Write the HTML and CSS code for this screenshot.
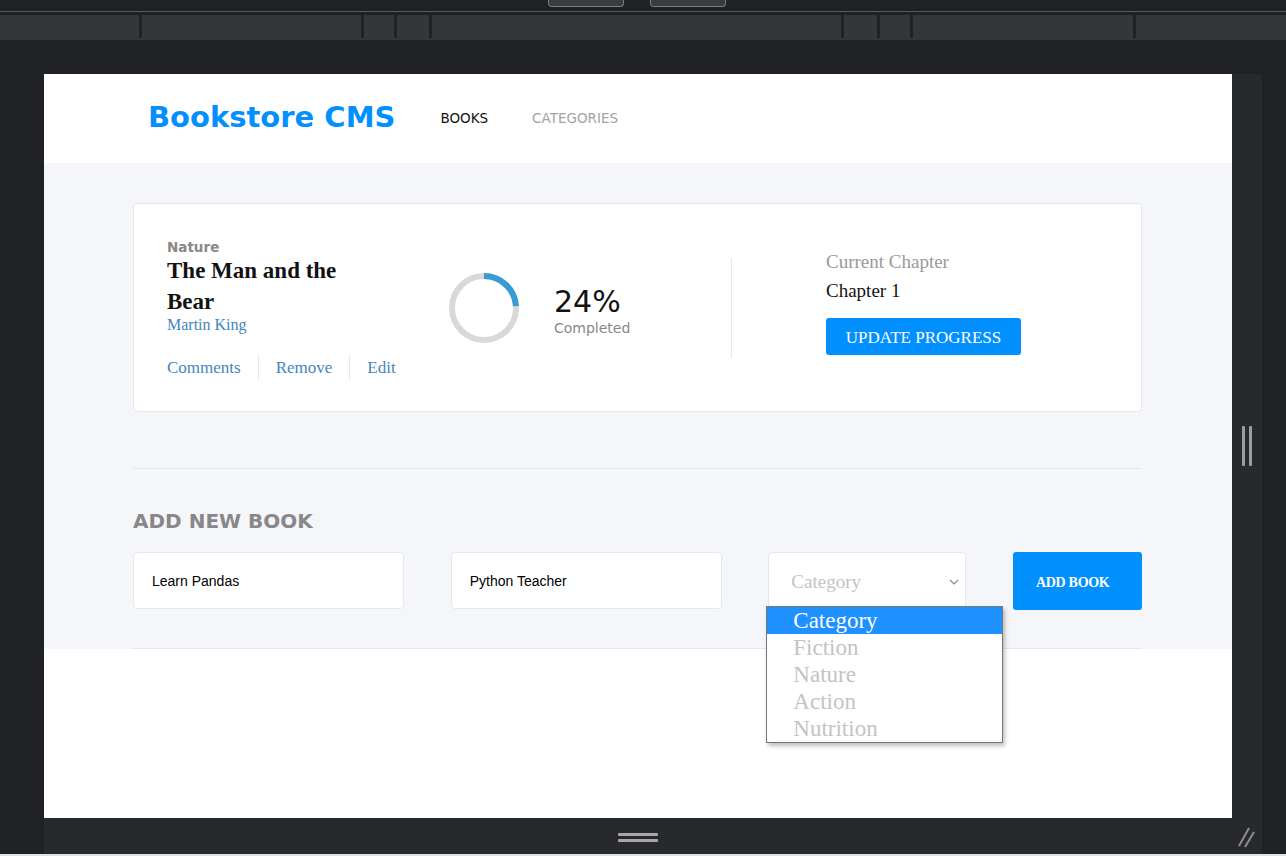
FILE: index.html
```html
<!DOCTYPE html>
<html lang="en">
<head>
<meta charset="utf-8">
<title>Bookstore CMS</title>
<link rel="stylesheet" href="styles.css">
</head>
<body>
<div class="chrome-top">
  <div class="tabstrip">
    <span class="tab-stub"></span>
    <span class="tab-stub"></span>
  </div>
  <div class="toolbar">
    <span class="seg s1"></span><span class="sep"></span>
    <span class="seg s2"></span><span class="sep"></span>
    <span class="seg s3"></span><span class="sep"></span>
    <span class="seg s4"></span><span class="sep"></span>
    <span class="seg s5"></span><span class="sep"></span>
    <span class="seg s6"></span><span class="sep"></span>
    <span class="seg s7"></span><span class="sep"></span>
    <span class="seg s8"></span><span class="sep"></span>
    <span class="seg s9"></span>
  </div>
</div>

<div class="workspace">
  <div class="gutter"></div>
  <div class="frame">
    <header class="app-header">
      <h1 class="logo">Bookstore CMS</h1>
      <nav>
        <ul class="nav">
          <li><a href="#" class="active">BOOKS</a></li>
          <li><a href="#" class="inactive">CATEGORIES</a></li>
        </ul>
      </nav>
    </header>

    <main class="main">
      <div class="container">
        <section class="book-card">
          <div class="info">
            <p class="genre">Nature</p>
            <h2 class="title">The Man and the Bear</h2>
            <p class="author">Martin King</p>
            <ul class="actions">
              <li>Comments</li>
              <li>Remove</li>
              <li>Edit</li>
            </ul>
          </div>
          <div class="progress">
            <svg class="ring" width="70" height="70" viewBox="0 0 70 70">
              <circle cx="35" cy="35" r="32" fill="none" stroke="#d9d9d9" stroke-width="6"/>
              <circle cx="35" cy="35" r="32" fill="none" stroke="#379cd2" stroke-width="6" stroke-dasharray="48.25 201.06" transform="rotate(-90 35 35)"/>
            </svg>
            <div class="progress-text">
              <p class="percent">24%</p>
              <p class="completed">Completed</p>
            </div>
          </div>
          <div class="vline"></div>
          <div class="chapter">
            <p class="chapter-label">Current Chapter</p>
            <p class="chapter-name">Chapter 1</p>
            <button class="update-btn" type="button">UPDATE PROGRESS</button>
          </div>
        </section>

        <hr class="divider">

        <section class="add-book">
          <h2 class="add-title">ADD NEW BOOK</h2>
          <form class="add-form">
            <input class="field" type="text" value="Learn Pandas">
            <input class="field" type="text" value="Python Teacher">
            <div class="select-wrap">
              <div class="select">
                <span>Category</span>
                <svg width="10" height="6" viewBox="0 0 10 6"><polyline points="1,1 5,5 9,1" fill="none" stroke="#8a8a8a" stroke-width="1.2"/></svg>
              </div>
              <ul class="dropdown">
                <li class="selected">Category</li>
                <li>Fiction</li>
                <li>Nature</li>
                <li>Action</li>
                <li>Nutrition</li>
              </ul>
            </div>
            <button class="add-btn" type="button">ADD BOOK</button>
          </form>
        </section>
      </div>
    </main>
  </div>
  <div class="side-panel"><span class="grip"></span><span class="grip"></span></div>
  <div class="gutter-r"></div>
</div>

<div class="bottom">
  <div class="gutter"></div>
  <div class="bpanel">
    <div class="bcenter"><span class="hbar"></span><span class="hbar"></span></div>
    <div class="bcorner">
      <svg width="20" height="24" viewBox="0 0 20 24"><line x1="2" y1="21" x2="12" y2="3" stroke="#8d8d8d" stroke-width="2"/><line x1="8" y1="22" x2="17" y2="7" stroke="#8d8d8d" stroke-width="2"/></svg>
    </div>
  </div>
</div>
<div class="base"></div>
</body>
</html>
```

FILE: styles.css
```css
* { box-sizing: border-box; }
html, body { margin: 0; padding: 0; }
body {
  width: 1286px;
  height: 856px;
  overflow: hidden;
  background: #202124;
  font-family: "DejaVu Sans", sans-serif;
}

/* browser chrome */
.tabstrip {
  height: 12px;
  border-bottom: 1px solid #55585c;
  display: flex;
  align-items: flex-start;
  gap: 26px;
  padding-left: 548px;
}
.tab-stub {
  width: 76px;
  height: 7px;
  background: #3a3b3e;
  border: 1px solid #7a7c80;
  border-top: none;
  border-radius: 0 0 4px 4px;
}
.toolbar {
  margin-top: 3px;
  height: 25px;
  background: #35363a;
  display: flex;
  align-items: flex-start;
}
.seg { height: 25px; flex: none; }
.sep { width: 3px; height: 23px; background: #202124; flex: none; }
.s1 { width: 139px; }
.s2 { width: 219px; }
.s3 { width: 30px; }
.s4 { width: 32px; }
.s5 { width: 409px; }
.s6 { width: 33px; }
.s7 { width: 30px; }
.s8 { width: 220px; }
.s9 { flex: 1; }

.workspace {
  margin-top: 34px;
  height: 744px;
  display: flex;
}
.gutter { width: 44px; flex: none; }
.gutter-r { flex: 1; }
.frame {
  width: 1188px;
  flex: none;
  background: #fff;
  display: flex;
  flex-direction: column;
  overflow: hidden;
}
.side-panel {
  width: 30px;
  flex: none;
  background: #28292d;
  display: flex;
  align-items: center;
  justify-content: center;
  gap: 4px;
}
.grip { width: 3px; height: 40px; background: #9d9d9d; border-radius: 1px; }

.bottom { display: flex; height: 36px; }
.bpanel { width: 1218px; flex: none; background: #28292d; display: flex; }
.bcenter {
  width: 1188px;
  display: flex;
  flex-direction: column;
  align-items: center;
  justify-content: center;
  gap: 3px;
  padding-top: 3px;
}
.hbar { width: 40px; height: 3px; background: #a6a6a6; border-radius: 1px; }
.bcorner { width: 30px; display: flex; align-items: center; justify-content: center; padding-top: 2px; }
.base { height: 2px; background: #dfe1e5; }

/* app header */
.app-header {
  height: 89px;
  flex: none;
  display: flex;
  align-items: center;
  padding: 0 0 3px 104px;
  background: #fff;
}
.logo {
  margin: 0;
  font-family: "DejaVu Sans", sans-serif;
  font-weight: 700;
  font-size: 29px;
  color: #0290ff;
}
.nav {
  display: flex;
  gap: 44px;
  margin: 0 0 0 45px;
  padding: 0;
  list-style: none;
}
.nav a {
  font-size: 13.5px;
  text-decoration: none;
  color: #121212;
}
.nav a.inactive { color: #a3a3a3; }

/* main */
.main {
  flex: none;
  background: #f5f6fa;
  padding: 40px 90px 0 89px;
}
.container { width: 1009px; }

.book-card {
  height: 209px;
  background: #fff;
  border: 1px solid #e8e8e8;
  border-radius: 4px;
  display: flex;
  align-items: center;
  padding-left: 33px;
}
.info { width: 282px; flex: none; padding-top: 3px; }
.genre {
  margin: 0;
  font: 700 13.5px/16px "DejaVu Sans", sans-serif;
  color: #888;
}
.title {
  margin: 0;
  width: 220px;
  font: 700 23px/31px "Liberation Serif", serif;
  color: #121212;
}
.author {
  margin: 0;
  font: 16px/16px "Liberation Serif", serif;
  color: #4386bf;
}
.actions {
  display: flex;
  margin: 22px 0 0;
  padding: 0;
  list-style: none;
}
.actions li {
  font: 17px/25px "Liberation Serif", serif;
  color: #4386bf;
  padding: 0 17px;
  border-left: 1px solid #e8e8e8;
}
.actions li:first-child { padding-left: 0; border-left: none; }

.progress {
  width: 282px;
  flex: none;
  display: flex;
  align-items: center;
  gap: 35px;
}
.ring { flex: none; }
.progress-text { padding-top: 6px; }
.percent {
  margin: 0;
  font: 30px/36px "DejaVu Sans", sans-serif;
  color: #121212;
}
.completed {
  margin: 0;
  font: 14px/17px "DejaVu Sans", sans-serif;
  color: #888;
}
.vline { width: 1px; height: 100px; background: #e8e8e8; flex: none; }
.chapter { margin-left: 94px; padding-bottom: 9px; }
.chapter-label {
  margin: 0;
  font: 19px/22px "Liberation Serif", serif;
  color: #9a9a9a;
}
.chapter-name {
  margin: 7px 0 0;
  font: 19px/22px "Liberation Serif", serif;
  color: #121212;
}
.update-btn {
  display: block;
  margin-top: 16px;
  width: 195px;
  height: 37px;
  padding: 2px 0 0;
  background: #0290ff;
  border: none;
  border-radius: 3px;
  color: #fff;
  font: 17px "Liberation Serif", serif;
}

.divider {
  margin: 56px 0 0;
  border: none;
  height: 1px;
  background: #e8e8e8;
}

.add-book {
  padding-bottom: 38px;
  border-bottom: 1px solid #e8e8e8;
}
.add-title {
  margin: 40px 0 0;
  font: 700 20px/24px "DejaVu Sans", sans-serif;
  color: #888;
}
.add-form {
  margin-top: 19px;
  display: flex;
  justify-content: space-between;
  align-items: flex-start;
}
.field {
  width: 271px;
  height: 57px;
  margin: 0;
  padding: 0 0 0 18px;
  background: #fff;
  border: 1px solid #e8e8e8;
  border-radius: 4px;
  font: 14px "Liberation Sans", sans-serif;
  color: #000;
  outline: none;
}
.select-wrap { position: relative; width: 198px; }
.select {
  height: 57px;
  background: #fff;
  border: 1px solid #e8e8e8;
  border-radius: 4px;
  display: flex;
  align-items: center;
  justify-content: space-between;
  padding: 2px 6px 0 22px;
  font: 19px "Liberation Serif", serif;
  color: #c4c4c4;
}
.dropdown {
  position: absolute;
  top: 54px;
  left: -2px;
  width: 237px;
  margin: 0;
  padding: 0;
  list-style: none;
  background: #fff;
  border: 1px solid #767676;
  box-shadow: 2px 3px 4px rgba(0, 0, 0, 0.25);
  z-index: 2;
}
.dropdown li {
  padding-left: 26px;
  font: 23px/27px "Liberation Serif", serif;
  color: #c4c4c4;
}
.dropdown li.selected { background: #1e90ff; color: #fff; }
.add-btn {
  width: 129px;
  height: 58px;
  padding: 4px 0 0 23px;
  text-align: left;
  background: #0290ff;
  border: none;
  border-radius: 3px;
  color: #fff;
  font: 700 14px "Liberation Serif", serif;
  letter-spacing: -0.3px;
}
```
